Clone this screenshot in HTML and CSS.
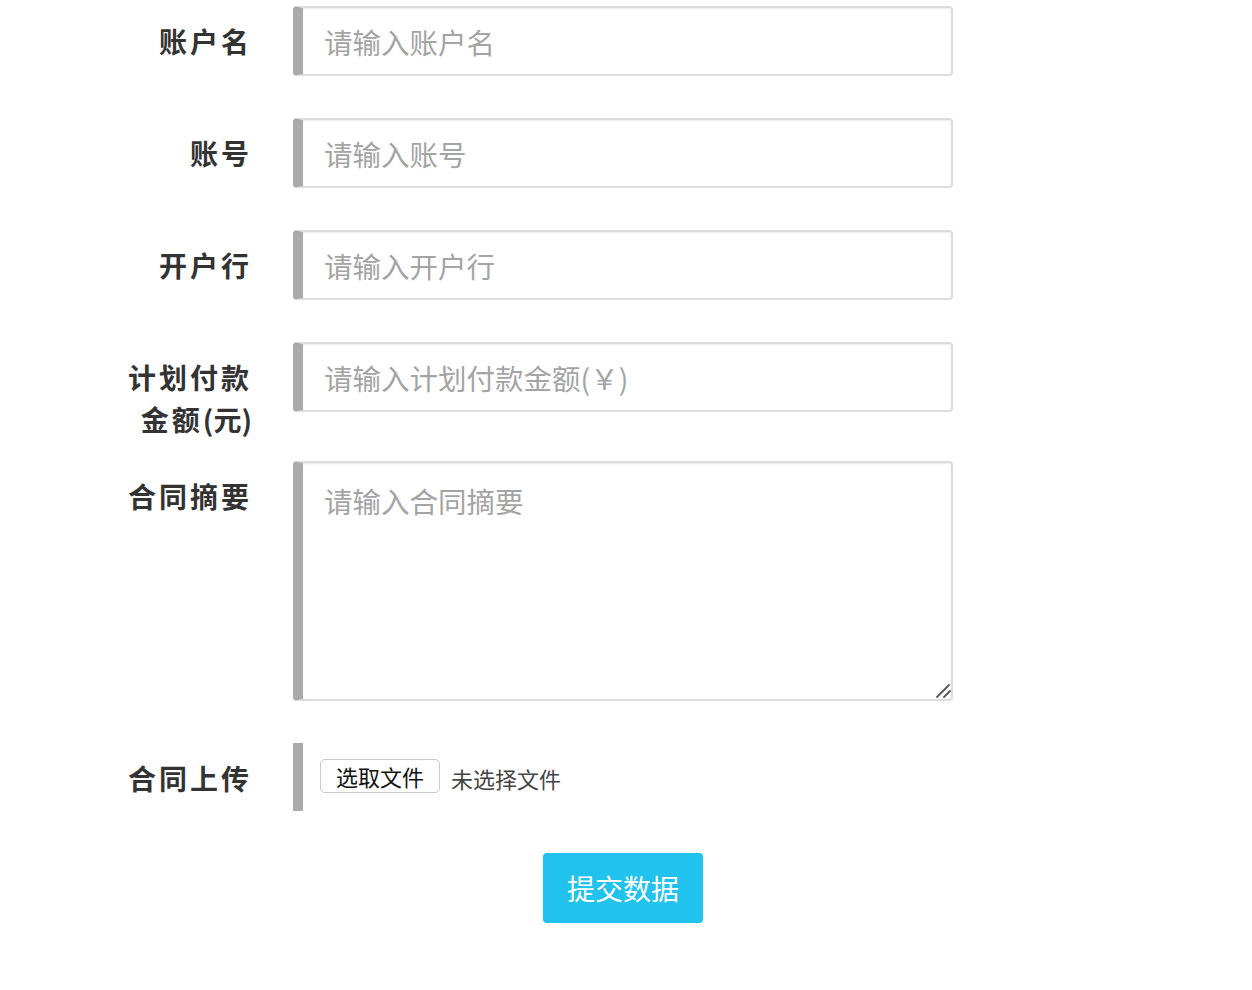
FILE: index.html
```html
<!DOCTYPE html>
<html lang="zh-CN">
<head>
<meta charset="utf-8">
<title>付款申请</title>
<link rel="stylesheet" href="styles.css">
</head>
<body>
<form class="form">
  <div class="row">
    <label class="label">账户名</label>
    <input class="field" type="text" placeholder="请输入账户名">
  </div>
  <div class="row">
    <label class="label">账号</label>
    <input class="field" type="text" placeholder="请输入账号">
  </div>
  <div class="row">
    <label class="label">开户行</label>
    <input class="field" type="text" placeholder="请输入开户行">
  </div>
  <div class="row row-tall">
    <label class="label">计划付款<span class="line2">金额<span class="tight">(元)</span></span></label>
    <input class="field" type="text" placeholder="请输入计划付款金额(￥)">
  </div>
  <div class="row">
    <label class="label">合同摘要</label>
    <div class="area-wrap">
      <textarea class="field area" placeholder="请输入合同摘要"></textarea>
      <svg class="grip" width="16" height="16" viewBox="0 0 16 16" aria-hidden="true">
        <line x1="2" y1="14" x2="14" y2="2" stroke="#555" stroke-width="1.8" stroke-linecap="round"/>
        <line x1="9" y1="14" x2="15" y2="8" stroke="#555" stroke-width="1.8" stroke-linecap="round"/>
      </svg>
    </div>
  </div>
  <div class="row">
    <label class="label">合同上传</label>
    <div class="file">
      <button type="button" class="file-btn">选取文件</button>
      <span class="file-name">未选择文件</span>
    </div>
  </div>
  <div class="actions">
    <button type="button" class="submit">提交数据</button>
  </div>
</form>
</body>
</html>
```

FILE: styles.css
```css
html, body {
  margin: 0;
  padding: 0;
  background: #fff;
}
body {
  font-family: "Noto Sans CJK SC", "Noto Sans", sans-serif;
  color: #333;
}
.form {
  padding-top: 6px;
  padding-left: 112px;
}
.row {
  display: flex;
  align-items: flex-start;
  margin-bottom: 42px;
}
.row-tall {
  margin-bottom: 21px;
}
.label {
  width: 140px;
  flex: none;
  box-sizing: border-box;
  padding-left: 12px;
  text-align: right;
  font-size: 28px;
  font-weight: bold;
  line-height: 42px;
  letter-spacing: 3px;
  padding-top: 14px;
  margin-right: 41px;
  color: #333;
}
.line2 {
  display: inline-block;
}
.tight {
  letter-spacing: 0;
}
.field {
  width: 660px;
  height: 70px;
  box-sizing: border-box;
  border: 2px solid #dcdcdc;
  border-left: 10px solid #aaaaaa;
  border-radius: 4px;
  box-shadow: inset 0 1px 2px rgba(0,0,0,0.08);
  padding: 0 21px;
  font-family: "Noto Sans CJK SC", "Noto Sans", sans-serif;
  font-size: 28.5px;
  color: #333;
  outline: none;
  background: #fff;
  margin: 0;
}
.field::placeholder {
  color: #a4a4a4;
}
.area-wrap {
  position: relative;
  width: 660px;
  height: 240px;
}
.area {
  display: block;
  height: 240px;
  padding-top: 20px;
  line-height: 36px;
  resize: none;
}
.grip {
  position: absolute;
  right: 2px;
  bottom: 2px;
}
.file {
  height: 68px;
  box-sizing: border-box;
  border-left: 10px solid #aaaaaa;
  padding-left: 17px;
  display: flex;
  align-items: center;
  gap: 11px;
}
.file-btn {
  height: 34px;
  box-sizing: border-box;
  padding: 0 15px;
  background: #fff;
  border: 1px solid #c8c8c8;
  border-radius: 5px;
  font-family: "Noto Sans CJK SC", sans-serif;
  font-size: 22px;
  line-height: 30px;
  color: #111;
  margin-top: -2px;
}
.file-name {
  font-size: 22px;
  color: #444;
  margin-top: 1px;
}
.actions {
  width: 660px;
  margin-left: 181px;
  display: flex;
  justify-content: center;
}
.submit {
  width: 160px;
  height: 70px;
  border: none;
  border-radius: 4px;
  background: #21c2ee;
  color: #fff;
  font-family: "Noto Sans CJK SC", sans-serif;
  font-size: 28px;
}
```
